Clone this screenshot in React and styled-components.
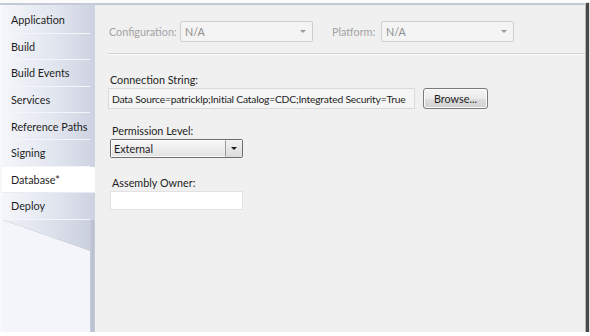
import React from "react";
import styled, { createGlobalStyle } from "styled-components";

const Global = createGlobalStyle`
  html, body { margin: 0; padding: 0; background: #ffffff; }
  body { font-family: Lato, "Open Sans", "Liberation Sans", sans-serif; }
`;

const Frame = styled.div`
  width: 586px;
  height: 332px;
  box-sizing: border-box;
  padding-top: 3px;
  background: #fbfbfc;
  box-shadow: 3px 3px 1px rgba(40, 40, 40, 0.85);
  display: flex;
  flex-direction: column;
`;

const Inner = styled.div`
  flex: 1;
  display: flex;
  border-top: 2px solid #c4c9d7;
  min-height: 0;
`;

const Sidebar = styled.div`
  width: 90px;
  position: relative;
  background: #f3f5fa;
  border-left: 2px solid #f7f8fb;
  box-sizing: border-box;
  display: flex;
  flex-direction: column;
`;

const TabList = styled.div`
  padding-top: 2px;
  background: linear-gradient(to right, #f4f6fa 0%, #e2e6ef 55%, #cdd2e1 100%);
  display: flex;
  flex-direction: column;
  margin-right: -5px;
  position: relative;
  z-index: 1;
`;

const Tab = styled.div`
  height: 26.6px;
  box-sizing: border-box;
  display: flex;
  align-items: center;
  padding-left: 9px;
  font-size: 10.8px;
  color: #1e1e1e;
  background: ${(p) => (p.$active ? "#ffffff" : "transparent")};
  border-bottom: 1px solid ${(p) => (p.$active ? "#e8ebf2" : "#f3f5f9")};
  margin-right: ${(p) => (p.$active ? "0" : "5px")};
  white-space: nowrap;
`;

const Tail = styled.div`
  height: 31px;
  background: linear-gradient(to right, #eef1f7 0%, #dde1eb 55%, #cbd0df 100%);
  clip-path: polygon(0 0, 100% 0, 100% 100%);
  position: relative;
  &::after {
    content: "";
    position: absolute;
    inset: 0;
    background: linear-gradient(to top right, transparent calc(50% - 1px), #b9bfcd 50%, transparent calc(50% + 1px));
  }
`;

const Divider = styled.div`
  width: 5px;
  background: linear-gradient(to right, #c7ccd9, #b8bece 60%, #c9cedb);
`;

const Panel = styled.div`
  flex: 1;
  background: #f0f0f0;
  border-right: 1px solid #b8b8b8;
  display: flex;
  flex-direction: column;
  padding: 16px 0 0 13px;
  font-size: 10.8px;
  color: #1e1e1e;
`;

const ConfigRow = styled.div`
  display: flex;
  align-items: center;
  height: 21px;
  margin-left: 1px;
`;

const DimLabel = styled.span`
  color: #a3a3a3;
  width: ${(p) => p.$w}px;
  flex: none;
`;

const DisabledCombo = styled.div`
  width: 133px;
  height: 21px;
  box-sizing: border-box;
  border: 1px solid #cfcfcf;
  border-radius: 2px;
  background: #f4f4f4;
  color: #8e8e8e;
  display: flex;
  align-items: center;
  justify-content: space-between;
  padding: 0 6px 0 4px;
  margin-right: ${(p) => p.$gap || 0}px;
`;

const SmallArrow = styled.span`
  width: 0;
  height: 0;
  border-left: 3px solid transparent;
  border-right: 3px solid transparent;
  border-top: 3px solid ${(p) => p.$color || "#9a9a9a"};
`;

const Rule = styled.div`
  height: 1px;
  background: #d2d2d2;
  border-bottom: 1px solid #fbfbfb;
  margin: 11px 0 0 0;
`;

const Field = styled.div`
  display: flex;
  flex-direction: column;
  margin-top: ${(p) => p.$top}px;
  margin-left: ${(p) => p.$indent || 0}px;
`;

const Label = styled.div`
  height: 14px;
  line-height: 14px;
  margin-left: 2px;
  margin-bottom: 1px;
`;

const FieldRow = styled.div`
  display: flex;
  align-items: center;
  gap: 8px;
`;

const ReadOnlyBox = styled.div`
  width: 307px;
  height: 21px;
  box-sizing: border-box;
  border: 1px solid #dadada;
  background: #f5f5f5;
  display: flex;
  align-items: center;
  padding-left: 3px;
  white-space: nowrap;
  overflow: hidden;
  font-size: 10.3px;
  letter-spacing: -0.2px;
`;

const Button = styled.div`
  width: 65px;
  height: 21px;
  box-sizing: border-box;
  border: 1px solid #7a7a7a;
  border-radius: 3px;
  background: linear-gradient(#f4f4f4 0%, #ebebeb 50%, #dddddd 51%, #d2d2d2 100%);
  display: flex;
  align-items: center;
  justify-content: center;
  box-shadow: inset 0 0 0 1px #fbfbfb;
`;

const Combo = styled.div`
  width: 133px;
  height: 19px;
  box-sizing: border-box;
  border: 1px solid #6e6e6e;
  border-radius: 2px;
  display: flex;
  background: #f2f2f2;
`;

const ComboText = styled.div`
  flex: 1;
  display: flex;
  align-items: center;
  padding-left: 2px;
  background: linear-gradient(#f6f6f6, #e4e4e4);
  border: 1px solid #fcfcfc;
  border-right: 1px solid #9a9a9a;
`;

const ComboButton = styled.div`
  width: 16px;
  display: flex;
  align-items: center;
  justify-content: center;
  background: linear-gradient(#f2f2f2, #dcdcdc);
`;

const TextBox = styled.div`
  width: 133px;
  height: 19px;
  box-sizing: border-box;
  border: 1px solid #e2e2e2;
  background: #ffffff;
`;

const tabs = [
  "Application",
  "Build",
  "Build Events",
  "Services",
  "Reference Paths",
  "Signing",
  "Database*",
  "Deploy",
];

export default function App() {
  return (
    <>
      <Global />
      <Frame>
        <Inner>
          <Sidebar>
            <TabList>
              {tabs.map((t) => (
                <Tab key={t} $active={t === "Database*"}>
                  {t}
                </Tab>
              ))}
            </TabList>
            <Tail />
          </Sidebar>
          <Divider />
          <Panel>
            <ConfigRow>
              <DimLabel $w={71}>Configuration:</DimLabel>
              <DisabledCombo $gap={19}>
                N/A
                <SmallArrow />
              </DisabledCombo>
              <DimLabel $w={49}>Platform:</DimLabel>
              <DisabledCombo>
                N/A
                <SmallArrow />
              </DisabledCombo>
            </ConfigRow>
            <Rule />
            <Field $top={18}>
              <Label>Connection String:</Label>
              <FieldRow>
                <ReadOnlyBox>Data Source=patricklp;Initial Catalog=CDC;Integrated Security=True</ReadOnlyBox>
                <Button>Browse...</Button>
              </FieldRow>
            </Field>
            <Field $top={15} $indent={2}>
              <Label>Permission Level:</Label>
              <Combo>
                <ComboText>External</ComboText>
                <ComboButton>
                  <SmallArrow $color="#1a1a1a" />
                </ComboButton>
              </Combo>
            </Field>
            <Field $top={18} $indent={2}>
              <Label>Assembly Owner:</Label>
              <TextBox />
            </Field>
          </Panel>
        </Inner>
      </Frame>
    </>
  );
}
